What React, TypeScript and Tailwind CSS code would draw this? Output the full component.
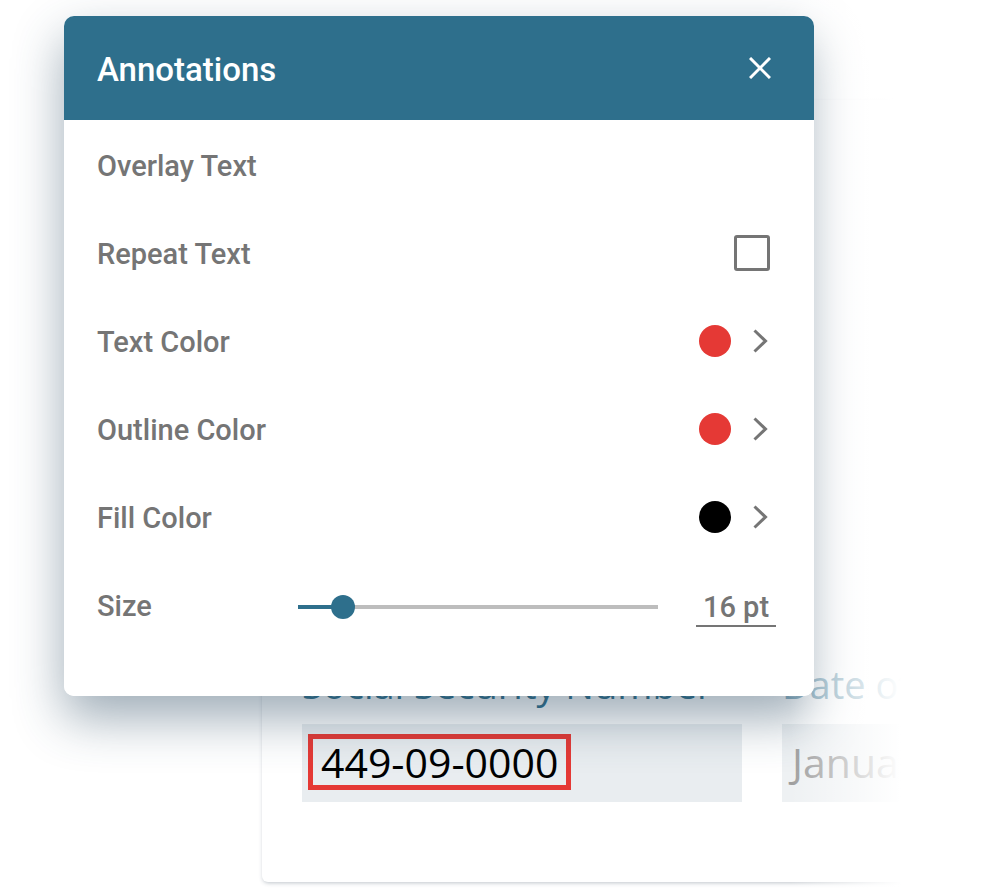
import React from 'react';

const rows = [
  { label: 'Text Color', color: 'bg-[#e53935]' },
  { label: 'Outline Color', color: 'bg-[#e53935]' },
  { label: 'Fill Color', color: 'bg-black' },
];

function Chevron() {
  return (
    <svg width="16" height="24" viewBox="0 0 16 24" className="ml-[21px]">
      <polyline points="2.5,1.5 13.5,12 2.5,22.5" fill="none" stroke="#757575" strokeWidth="3" />
    </svg>
  );
}

export default function App() {
  return (
    <div className="relative w-full h-[892px] overflow-hidden bg-white">
      {/* document card behind the dialog */}
      <div className="ml-[262px] mt-[100px] w-[760px] rounded-b-md bg-white px-[40px] pt-[562px] pb-[80px] shadow-[0_2px_4px_-1px_rgba(40,60,80,0.3)] font-['Open_Sans',sans-serif]">
        <div className="flex gap-[40px]">
          <div className="w-[440px] flex-shrink-0">
            <div className="text-[38px] leading-[44px] text-[#2f6f8c] whitespace-nowrap">Social Security Number</div>
            <div className="mt-[18px] h-[78px] bg-[#e9edf0] pt-[10px] pl-[6px]">
              <span className="inline-block border-[5px] border-[#e53935] px-[8px] text-[41px] leading-[46px] text-black">449-09-0000</span>
            </div>
          </div>
          <div className="w-[300px] flex-shrink-0">
            <div className="text-[38px] leading-[44px] text-[#8fb3c4] whitespace-nowrap">Date of Birth</div>
            <div className="mt-[18px] h-[78px] bg-[#eef1f3] pl-[10px] flex items-center text-[41px] text-[#9e9e9e] whitespace-nowrap">January 1, 1970</div>
          </div>
        </div>
      </div>

      {/* dialog shadow */}
      <div className="absolute left-[64px] top-[16px] w-[750px] h-[680px] rounded-[10px] shadow-[0_22px_50px_rgba(40,70,95,0.45)]" />

      {/* right side fade */}
      <div className="absolute top-0 bottom-0 left-[790px] right-0 bg-gradient-to-r from-white/0 from-0% to-white to-[55%]" />

      {/* dialog */}
      <div className="absolute left-[64px] top-[16px] w-[750px] h-[680px] rounded-[10px] bg-white overflow-hidden font-['Roboto',sans-serif]">
        <div className="h-[104px] bg-[#2e6f8c] flex items-center justify-between pt-[3px] pl-[33px] pr-[43px]">
          <span className="text-[33px] font-medium text-white">Annotations</span>
          <svg width="22" height="22" viewBox="0 0 22 22" className="-mt-[3px]">
            <path d="M1 1L21 21M21 1L1 21" stroke="white" strokeWidth="3" />
          </svg>
        </div>

        <div className="pt-[3px] text-[29px] font-medium text-[#757575]">
          <div className="h-[88px] flex items-center pl-[33px] pr-[44px]">Overlay Text</div>
          <div className="h-[88px] flex items-center justify-between pl-[33px] pr-[44px]">
            <span>Repeat Text</span>
            <div className="w-[36px] h-[36px] -mt-[4px] rounded-[3px] border-[3px] border-[#757575]" />
          </div>
          {rows.map((r) => (
            <div key={r.label} className="h-[88px] flex items-center justify-between pl-[33px] pr-[46px]">
              <span>{r.label}</span>
              <div className="flex items-center -mt-[4px]">
                <div className={`w-[32px] h-[32px] rounded-full ${r.color}`} />
                <Chevron />
              </div>
            </div>
          ))}
          <div className="h-[88px] flex items-center pl-[33px]">
            <span className="w-[201px]">Size</span>
            <div className="relative w-[360px] h-[4px] bg-[#bdbdbd]">
              <div className="absolute left-0 top-0 h-[4px] w-[45px] bg-[#2e6f8c]" />
              <div className="absolute left-[33px] top-[-10px] w-[24px] h-[24px] rounded-full bg-[#2e6f8c]" />
            </div>
            <div className="ml-[38px] w-[80px] border-b-2 border-[#757575] text-center leading-[36px] pt-[2px]">16 pt</div>
          </div>
        </div>
      </div>
    </div>
  );
}
